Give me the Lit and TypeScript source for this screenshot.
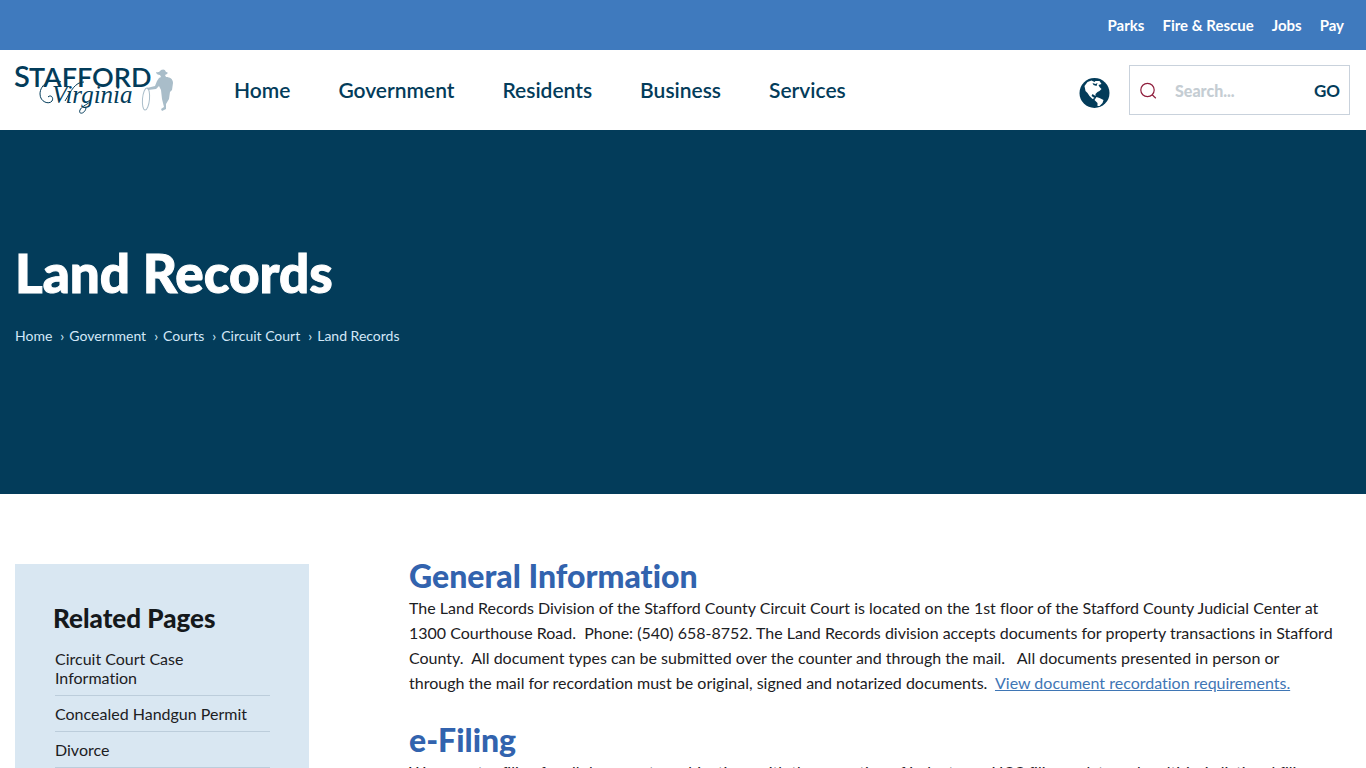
import { LitElement, html, css } from "lit";
import { customElement } from "lit/decorators.js";

const topLinks = ["Parks", "Fire & Rescue", "Jobs", "Pay"];
const mainLinks = ["Home", "Government", "Residents", "Business", "Services"];
const trail = ["Home", "Government", "Courts", "Circuit Court", "Land Records"];
const related = ["Circuit Court Case Information", "Concealed Handgun Permit", "Divorce"];

@customElement("app-root")
export class AppRoot extends LitElement {
  static styles = css`
    :host {
      display: block;
      height: 100vh;
      overflow: hidden;
      background: #fff;
      color: #1c2023;
      font-family: Lato, "Open Sans", sans-serif;
      font-size: 16px;
      line-height: 25px;
      font-variant-ligatures: no-common-ligatures;
    }
    * { box-sizing: border-box; }
    h1, h2, p, ul, ol { margin: 0; padding: 0; }
    ul, ol { list-style: none; }
    a { color: inherit; text-decoration: none; }
    button { font-family: inherit; cursor: pointer; }
    .topbar { background: #3f7abe; padding: 0 22px; color: #fff; }
    .toplinks { display: flex; justify-content: flex-end; align-items: center; gap: 18px; height: 50px; font-size: 15px; font-weight: 700; }
    .header { display: flex; align-items: center; height: 80px; padding: 0 16px 0 15px; color: #033c5a; }
    .logo { display: block; }
    .logo svg { display: block; overflow: visible; }
    .word { font-family: Lato, sans-serif; font-weight: 600; fill: #033c5a; }
    .script { font-family: "Liberation Serif", serif; font-style: italic; fill: #033c5a; }
    .mainlinks { display: flex; gap: 48px; margin-left: 59px; font-size: 21px; line-height: 24px; font-weight: 600; }
    .tools { display: flex; align-items: center; gap: 19px; margin-left: auto; }
    .globe { border: 0; background: none; padding: 5px 0 0; display: flex; }
    .search { display: flex; align-items: center; width: 221px; height: 50px; padding: 0 9px 0 10px; border: 1px solid #c9d2dc; }
    .lens { display: flex; }
    .field { flex: 1; min-width: 0; margin-left: 18px; border: 0; padding: 0; outline: 0; background: none; font: 900 16px Lato, sans-serif; color: #033c5a; }
    .field::placeholder { color: #c5cdd3; opacity: 1; }
    .go { border: 0; padding: 0; background: none; color: #033c5a; font-size: 17px; font-weight: 700; }
    .hero { background: #033c5a; color: #fff; min-height: 364px; padding: 113px 15px 0; }
    .title { font-size: 53px; line-height: 60px; font-weight: 900; -webkit-text-stroke: 1px currentColor; }
    .trail { display: flex; margin-top: 20px; font-size: 14px; color: #d3e8f8; }
    .crumb + .crumb::before { content: "›"; margin: 0 5px 0 8px; }
    .body { display: grid; grid-template-columns: 294px 1fr; column-gap: 100px; padding: 70px 15px 0; align-items: start; }
    .side { background: #d9e7f2; padding: 39px 39px 60px 38px; }
    .side-title { font-size: 26px; line-height: 30px; font-weight: 900; color: #15191c; }
    .pages { margin: 8px 0 0 2px; line-height: 19px; }
    .page { padding: 8px 12px 8px 0; border-bottom: 1px solid #bccddb; }
    .content { padding-right: 16px; }
    .section-title { margin-bottom: 7px; font-size: 32px; line-height: 24px; font-weight: 900; color: #3263ae; }
    .text { margin-bottom: 33px; }
    .link { color: #3f76b5; text-decoration: underline; }
  `;

  render() {
    return html`
      <nav class="topbar" aria-label="Quick links">
        <ul class="toplinks">${topLinks.map((t) => html`<li><a href="#">${t}</a></li>`)}</ul>
      </nav>
      <header class="header">
        <a class="logo" href="#" aria-label="Stafford Virginia">
          <svg width="160" height="50" viewBox="0 0 160 50">
            <text class="word" x="-1" y="22" font-size="29">S</text>
            <text class="word" x="14" y="22" font-size="27">TAFFORD</text>
            <text class="script" x="37" y="38" font-size="25">Virginia</text>
            <path d="M46 17C37 12 25 19 25 29C25 37 34 40 37 36C39 33 36 29 33 32M71 43C70 49 63 50 65 45C66 42 71 40 75 37M50 36C56 26 60 17 69 17" fill="none" stroke="#033c5a" stroke-width="1"/>
            <g fill="#a9bdc9">
              <path d="M141 7C144 8 145 6 146 5C148 4 150 4 151 7C153 7 153 8 152 9L150 10L151 12C155 12 158 14 158 18L157 25L155 27L154 34L151 39L151 44L147 46L146 44L149 42L147 34L146 25L144 21L141 24L133 25L132 23L140 21L142 16L144 13L146 12L145 10C143 10 141 9 141 7Z"/>
              <ellipse cx="131" cy="34" rx="3.5" ry="11" fill="none" stroke="#a9bdc9" transform="rotate(5 131 34)"/>
            </g>
          </svg>
        </a>
        <nav aria-label="Main"><ul class="mainlinks">${mainLinks.map((t) => html`<li><a href="#">${t}</a></li>`)}</ul></nav>
        <div class="tools">
          <button class="globe" type="button" aria-label="Translate">
            <svg width="31" height="30" viewBox="0 0 30 30">
              <circle cx="15" cy="15" r="15" fill="#033c5a"/>
              <path fill="#fff" d="M5 8L8 4L12 2.500L15 4L16 3L20 3L22 6L19 7L20 9L22 11L20 13L18 14L16 16L16 18L13 16L12 18L15 20L13 21L10 18L8 15L6 13ZM17 19L20 20L24 22L23 25L20 28L18 28L18 25L15 22Z"/>
              <path fill="#033c5a" d="M13 5L16 6L18 5L17 8L14 7Z"/>
            </svg>
          </button>
          <form class="search" role="search">
            <label class="lens" for="q" aria-label="Search">
              <svg width="17" height="17" viewBox="0 0 17 17" fill="none" stroke="#8f1d3c" stroke-width="1.2">
                <circle cx="7.5" cy="8" r="6.7"/><path d="M12.2 12.8L15.8 16.2"/>
              </svg>
            </label>
            <input class="field" id="q" type="text" placeholder="Search..." />
            <button class="go" type="button">GO</button>
          </form>
        </div>
      </header>
      <section class="hero">
        <h1 class="title">Land Records</h1>
        <ol class="trail">${trail.map((t) => html`<li class="crumb"><a href="#">${t}</a></li>`)}</ol>
      </section>
      <div class="body">
        <aside class="side">
          <h2 class="side-title">Related Pages</h2>
          <ul class="pages">${related.map((t) => html`<li class="page"><a href="#">${t}</a></li>`)}</ul>
        </aside>
        <main class="content">
          <h2 class="section-title">General Information</h2>
          <p class="text">The Land Records Division of the Stafford County Circuit Court is located on the 1st floor of the Stafford County Judicial Center at 1300 Courthouse Road.&nbsp; Phone: (540) 658-8752. The Land Records division accepts documents for property transactions in Stafford County.&nbsp; All document types can be submitted over the counter and through the mail.&nbsp;&nbsp; All documents presented in person or through the mail for recordation must be original, signed and notarized documents.&nbsp; <a class="link" href="#">View document recordation requirements.</a></p>
          <h2 class="section-title">e-Filing</h2>
          <p class="text">We accept e-filing for all document combinations with the exception of indentures, UCC filings, plats and multi-jurisdictional filings.</p>
        </main>
      </div>
    `;
  }
}
